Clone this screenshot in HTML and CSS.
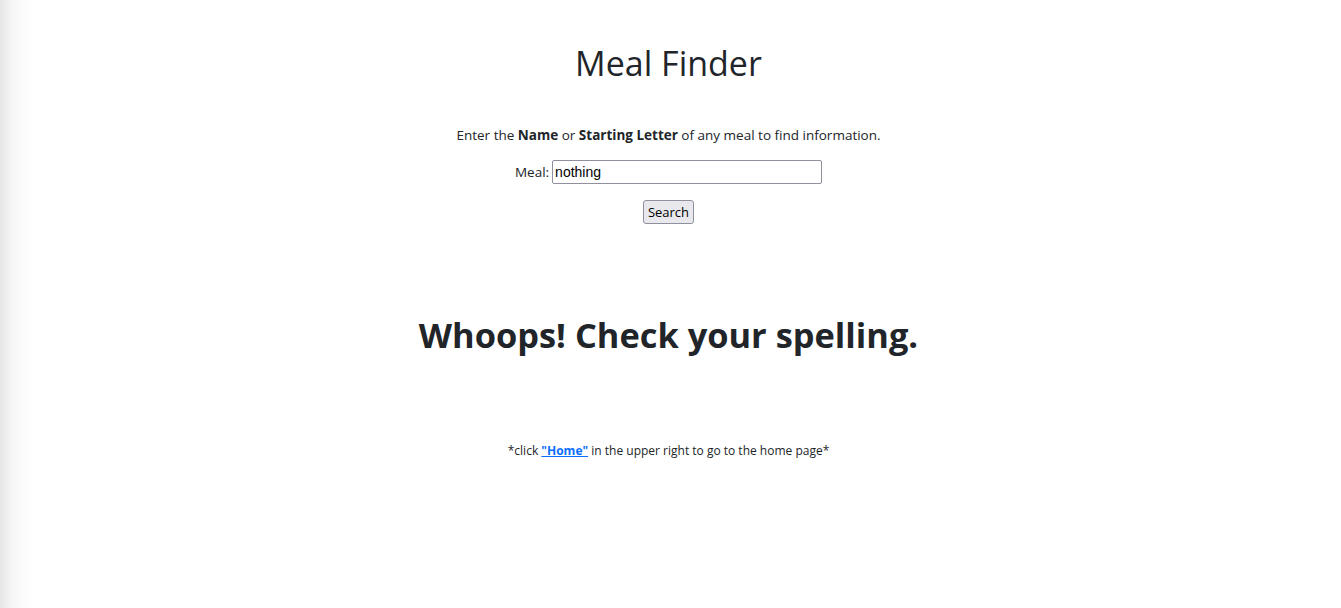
FILE: index.html
```html
<!DOCTYPE html>
<html lang="en">
<head>
<meta charset="utf-8">
<title>Meal Finder</title>
<link rel="stylesheet" href="styles.css">
</head>
<body>
<div class="page">
  <main class="content">
    <h1 class="title">Meal Finder</h1>
    <p class="intro">Enter the <b>Name</b> or <b>Starting Letter</b> of any meal to find information.</p>
    <form class="search-form">
      <div class="field">
        <label for="meal">Meal:</label>
        <input id="meal" type="text" value="nothing">
      </div>
      <button type="button" class="btn">Search</button>
    </form>
    <h2 class="error">Whoops! Check your spelling.</h2>
    <p class="note">*click <a href="#" class="home-link">"Home"</a> in the upper right to go to the home page*</p>
  </main>
</div>
</body>
</html>
```
FILE: styles.css
```css
html, body {
  margin: 0;
  padding: 0;
  height: 100%;
}
body {
  font-family: "Open Sans", "Noto Sans", sans-serif;
  color: #212529;
  background: #fff;
}
.page {
  min-height: 100%;
  background: linear-gradient(to right, #e6e6e6 0px, #f6f6f6 12px, #fdfdfd 26px, #ffffff 34px);
}
.content {
  display: flex;
  flex-direction: column;
  align-items: center;
  text-align: center;
  padding: 40px 4px 0 0;
}
.title {
  margin: 0;
  font-size: 34px;
  font-weight: 400;
  line-height: 46px;
}
.intro {
  margin: 39px 0 0;
  font-size: 13.5px;
  line-height: 20px;
}
.search-form {
  display: flex;
  flex-direction: column;
  align-items: center;
  gap: 16px;
  margin-top: 15px;
}
.field {
  display: flex;
  align-items: center;
  gap: 3px;
  font-size: 13.5px;
}
.field input {
  width: 270px;
  height: 24px;
  box-sizing: border-box;
  border: 1px solid #8f8f9d;
  border-radius: 2px;
  padding: 1px 2px;
  font-family: "Liberation Sans", Arial, sans-serif;
  font-size: 14px;
  color: #000;
}
.btn {
  height: 24px;
  padding: 0 4px;
  border: 1px solid #8f8f9d;
  border-radius: 3px;
  background: #e9e9ed;
  font-family: "Open Sans", sans-serif;
  font-size: 13px;
  color: #000;
}
.error {
  margin: 89px 0 0;
  font-size: 34.4px;
  font-weight: 700;
  line-height: 44px;
}
.note {
  margin: 85px 0 0;
  font-size: 12px;
  line-height: 18px;
}
.home-link {
  color: #0d6efd;
  font-weight: 700;
}
```
